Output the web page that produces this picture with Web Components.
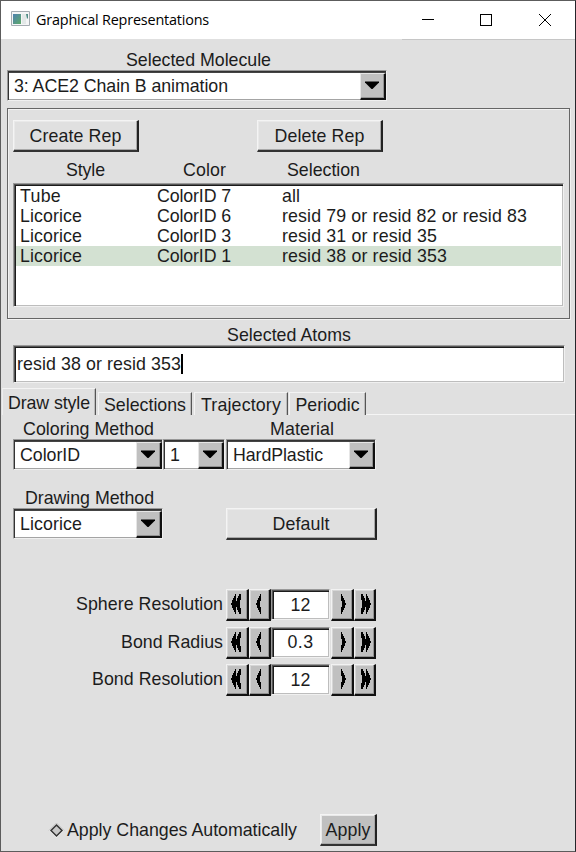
<!DOCTYPE html>
<html lang="en">
<head>
<meta charset="utf-8">
<title>Graphical Representations</title>
<style>
html,body{margin:0;height:852px;overflow:hidden;background:#e0e0e0}
body{font:17.8px/20px "Liberation Sans",Arial,sans-serif;color:#1c1c1c}
</style>
</head>
<body>
<vmd-window></vmd-window>
<script>
const make = (name, html, init) => {
  const t = document.createElement('template');
  t.innerHTML = html;
  customElements.define(name, class extends HTMLElement {
    constructor() {
      super();
      this.attachShadow({mode: 'open'}).append(t.content.cloneNode(true));
    }
    connectedCallback() { if (init) init(this, this.shadowRoot); }
  });
};

/* One line of text, tracked to an advance width given by "w". */
make('fl-text', `<style>
:host{display:block;white-space:pre;flex:none}
span{display:inline-block;white-space:pre}
</style><span></span>`, (el, root) => {
  const s = root.querySelector('span');
  s.textContent = el.getAttribute('t');
  const w = +el.getAttribute('w');
  if (w) {
    s.style.letterSpacing = (w - s.getBoundingClientRect().width) / s.textContent.length + 'px';
    el.style.width = w + 'px';
  }
});

/* Raised push button */
make('fl-button', `<style>
:host{display:flex;box-sizing:border-box;flex:none;align-items:center;justify-content:center;height:32px;
background:var(--face,#e0e0e0);border:1px solid #f4f4f4;border-right:2px solid #222;border-bottom:2px solid #333;
box-shadow:inset -1px -1px #a8a8a8,inset 1px 1px #e9e9e9}
</style><slot></slot>`);

/* Sunken drop-down with an arrow button */
make('fl-choice', `<style>
:host{display:flex;box-sizing:border-box;flex:none;height:31px;background:#fff;
border:1px solid #989898;border-right-color:#f0f0f0;border-bottom-color:#f0f0f0;
box-shadow:inset 1px 1px #333,inset 0 2px #444,inset 0 -1px #a4a4a4}
.v{flex:1;display:flex;align-items:center;padding-left:6px}
.b{box-sizing:border-box;width:26px;height:27px;margin:2px 0 0;background:#c0c0c0;border:solid;border-width:1px 2px 2px 1px;
border-color:#e6e6e6 #111 #111 #e6e6e6;box-shadow:inset -1px -1px #929292}
svg{display:block;margin:7px 0 0 4px}
</style><div class="v"><slot></slot></div><div class="b"><svg width="16" height="9"><path d="M0 .5h14v1L7.500 8h-1L0 1.500z"/></svg></div>`);

/* Sunken text field */
make('fl-field', `<style>
:host{display:flex;box-sizing:border-box;flex:none;align-items:center;background:#fff;border:1px solid #999;
border-right-color:#f0f0f0;border-bottom-color:#f0f0f0;box-shadow:inset 1px 1px #555,inset 2px 2px #1b1b1b,inset -1px -1px #bdbdbd}
</style><slot></slot>`);

make('fl-row', `<style>
:host{display:grid;grid-template-columns:137px 125px 1fr;align-items:center;height:20px;padding-left:4px}
:host([selected]){background:#d3e1d2}
</style><slot></slot>`);

make('fl-tab', `<style>
:host{display:flex;box-sizing:border-box;flex:none;justify-content:center;height:23px;padding-top:2px;
border:1px solid #f3f3f3;border-right:1px solid #555;border-bottom:0;box-shadow:inset -1px 0 #bbb}
:host([active]){height:27px;padding-top:4px;border-left-color:#eee}
</style><slot></slot>`);

/* Label plus value with coarse and fine step buttons */
make('fl-counter', `<style>
:host{display:flex;height:32px;align-items:center;justify-content:flex-end;width:375px}
#l{margin:0 3px 2px 0}
.s{box-sizing:border-box;width:23px;height:32px;background:#c0c0c0;border:solid;border-width:1px 2px 2px 1px;
border-color:#f2f2f2 #111 #111 #f2f2f2;box-shadow:inset -1px -1px #929292,inset 1px 1px #d6d6d6}
.n{width:22px}
fl-field{width:59px;height:31px;justify-content:center;margin-right:1px;align-self:flex-start}
svg{display:block;margin-top:4px}
.r svg{transform:scaleX(-1)}
</style><fl-text id="l"></fl-text>
<div class="s"><svg width="20" height="20"><path d="M4 9h1V6h1V4h1V2h1V0h1v7h1V4h1V2h1V0h2v6h-1v8h1v6h-2v-2h-1v-2h-1v-3H9v7H8v-2H7v-2H6v-2H5v-3H4z"/></svg></div>
<div class="s n"><svg width="19" height="20"><path d="M6 9h1V6h1V4h1V2h1V0h1v7h-1v6h1v7h-1v-2H9v-2H8v-2H7v-3H6z"/></svg></div>
<fl-field><fl-text id="v"></fl-text></fl-field>
<div class="s r"><svg width="20" height="20"><path d="M6 9h1V6h1V4h1V2h1V0h1v7h-1v6h1v7h-1v-2H9v-2H8v-2H7v-3H6z"/></svg></div>
<div class="s n r"><svg width="19" height="20"><path d="M3 9h1V6h1V4h1V2h1V0h1v7h1V4h1V2h1V0h2v6h-1v8h1v6h-2v-2h-1v-2H9v-3H8v7H7v-2H6v-2H5v-2H4v-3H3z"/></svg></div>`, (el, root) => {
  const set = (id, t, w) => {
    const old = root.getElementById(id), n = document.createElement('fl-text');
    n.id = id; n.setAttribute('t', t); n.setAttribute('w', w);
    old.replaceWith(n);
  };
  set('l', el.getAttribute('label'), el.getAttribute('lw'));
  set('v', el.getAttribute('value'), el.getAttribute('vw'));
});

make('title-bar', `<style>
:host{display:flex;align-items:center;height:38px;background:#fff;color:#000;font:14.4px/20px "Open Sans","Noto Sans",sans-serif}
.app{margin:0 6px 2px 10px;flex:none}
.sp{flex:1}
.c{margin-right:23px}
</style>
<svg class="app" width="19" height="16"><defs><linearGradient id="g" x2="1" y2="1"><stop stop-color="#4f81b0"/><stop offset="1" stop-color="#5daa68"/></linearGradient></defs>
<path d="M.5.5h18v14H.5z" fill="#f4f5f6" stroke="#a5acb2"/><path d="M2 3h8v10H2z" fill="url(#g)"/><path d="M11 3h4v10h-4z" fill="#e2e8e7"/><path d="M15 3h2v4l-1 1z" fill="#4f8d86"/></svg>
<fl-text t="Graphical Representations" w="173"></fl-text><div class="sp"></div>
<svg width="132" height="14" class="c" fill="none" stroke="#000" shape-rendering="crispEdges"><path d="M2 6.500h12M60.500 1.500h11v11h-11z"/><path shape-rendering="auto" d="m119 1 12 12m0-12-12 12"/></svg>`);

make('vmd-window', `<style>
:host{display:block;box-sizing:border-box;width:576px;height:852px;background:#e0e0e0;border:1px solid #5c5c5c;border-right-color:#25252a}
.line{height:1px;margin-left:401px;background:#c6c6c6}
.lb{display:flex;height:20px}
.group{box-sizing:border-box;width:563px;height:211px;margin:7px 0 0 6px;padding:11px 0 0 5px;border:1px solid #666;box-shadow:inset 1px 1px #f2f2f2,1px 1px #f2f2f2}
.btns{display:flex;gap:118px}
.heads{display:flex;height:20px;margin-top:8px}
.list{box-sizing:border-box;display:block;width:551px;height:124px;margin-top:3px;padding:1px 2px 1px 2px}
.rows{flex:1;align-self:flex-start}
.caret{width:2px;height:20px;background:#000}
.tabs{display:flex;align-items:flex-end;height:27px;margin-top:5px;padding-left:1px}
.rest{flex:1;height:1px;background:#f5f5f5}
.choices{display:flex;margin-left:12px}
.counters{display:grid;gap:5.5px;margin-top:49px}
.foot{display:flex;align-items:center;height:32px;margin-top:118px;padding-left:47px}
</style>
<title-bar></title-bar><div class="line"></div>
<div class="lb" style="margin:10px 0 0 125px"><fl-text t="Selected Molecule" w="145"></fl-text></div>
<fl-choice style="width:380px;margin-left:6px"><fl-text t="3: ACE2 Chain B animation" w="214"></fl-text></fl-choice>
<div class="group">
 <div class="btns"><fl-button style="width:126px"><fl-text t="Create Rep" w="92"></fl-text></fl-button><fl-button style="width:126px"><fl-text t="Delete Rep" w="90"></fl-text></fl-button></div>
 <div class="heads"><fl-text t="Style" w="39" style="margin-left:53px"></fl-text><fl-text t="Color" w="43" style="margin-left:78px"></fl-text><fl-text t="Selection" w="73" style="margin-left:61px"></fl-text></div>
 <fl-field class="list"><div class="rows">
  <fl-row style="margin-top:1px"><fl-text t="Tube" w="41"></fl-text><fl-text t="ColorID 7" w="74"></fl-text><fl-text t="all" w="18"></fl-text></fl-row>
  <fl-row><fl-text t="Licorice" w="62"></fl-text><fl-text t="ColorID 6" w="74"></fl-text><fl-text t="resid 79 or resid 82 or resid 83" w="245"></fl-text></fl-row>
  <fl-row><fl-text t="Licorice" w="62"></fl-text><fl-text t="ColorID 3" w="74"></fl-text><fl-text t="resid 31 or resid 35" w="155"></fl-text></fl-row>
  <fl-row selected><fl-text t="Licorice" w="62"></fl-text><fl-text t="ColorID 1" w="74"></fl-text><fl-text t="resid 38 or resid 353" w="165"></fl-text></fl-row>
 </div></fl-field>
</div>
<div class="lb" style="margin:6px 0 0 226px"><fl-text t="Selected Atoms" w="124"></fl-text></div>
<fl-field style="width:552px;height:38px;margin-left:12px;padding-left:3px"><fl-text t="resid 38 or resid 353" w="164"></fl-text><div class="caret"></div></fl-field>
<div class="tabs">
 <fl-tab active style="width:94px"><fl-text t="Draw style" w="82"></fl-text></fl-tab><div style="width:2px"></div>
 <fl-tab style="width:94px"><fl-text t="Selections" w="82"></fl-text></fl-tab><div style="width:2px"></div>
 <fl-tab style="width:94px"><fl-text t="Trajectory" w="80"></fl-text></fl-tab><div style="width:1px"></div>
 <fl-tab style="width:77px"><fl-text t="Periodic" w="64"></fl-text></fl-tab><div class="rest"></div>
</div>
<div class="lb" style="margin:4px 0 0 22px"><fl-text t="Coloring Method" w="131"></fl-text><fl-text t="Material" w="64" style="margin-left:116px"></fl-text></div>
<div class="choices">
 <fl-choice style="width:150px"><fl-text t="ColorID" w="60"></fl-text></fl-choice>
 <fl-choice style="width:62px"><fl-text t="1" w="10"></fl-text></fl-choice>
 <fl-choice style="width:150px;margin-left:1px"><fl-text t="HardPlastic" w="90"></fl-text></fl-choice>
</div>
<div class="lb" style="margin:18px 0 0 24px"><fl-text t="Drawing Method" w="129"></fl-text></div>
<div class="choices"><fl-choice style="width:150px"><fl-text t="Licorice" w="62"></fl-text></fl-choice><fl-button style="width:151px;margin-left:63px"><fl-text t="Default" w="57"></fl-text></fl-button></div>
<div class="counters">
 <fl-counter label="Sphere Resolution" lw="147" value="12" vw="20"></fl-counter>
 <fl-counter label="Bond Radius" lw="102" value="0.3" vw="26"></fl-counter>
 <fl-counter label="Bond Resolution" lw="131" value="12" vw="20"></fl-counter>
</div>
<div class="foot"><svg width="17" height="17"><path d="M8.500 1 16 8.500 8.500 16 1 8.500z" fill="#f4f4f4"/><path d="M1 8.500 8.500 1 16 8.500" fill="none" stroke="#bbb"/><path d="M8.500 3 14 8.500 8.500 14 3 8.500z" fill="#c8c8c8" stroke="#333" stroke-width="1.500"/></svg>
 <fl-text t="Apply Changes Automatically" w="230" style="margin-left:2px"></fl-text>
 <fl-button style="width:57px;margin-left:23px;--face:#c0c0c0"><fl-text t="Apply" w="45"></fl-text></fl-button></div>
`);
</script>
</body>
</html>
